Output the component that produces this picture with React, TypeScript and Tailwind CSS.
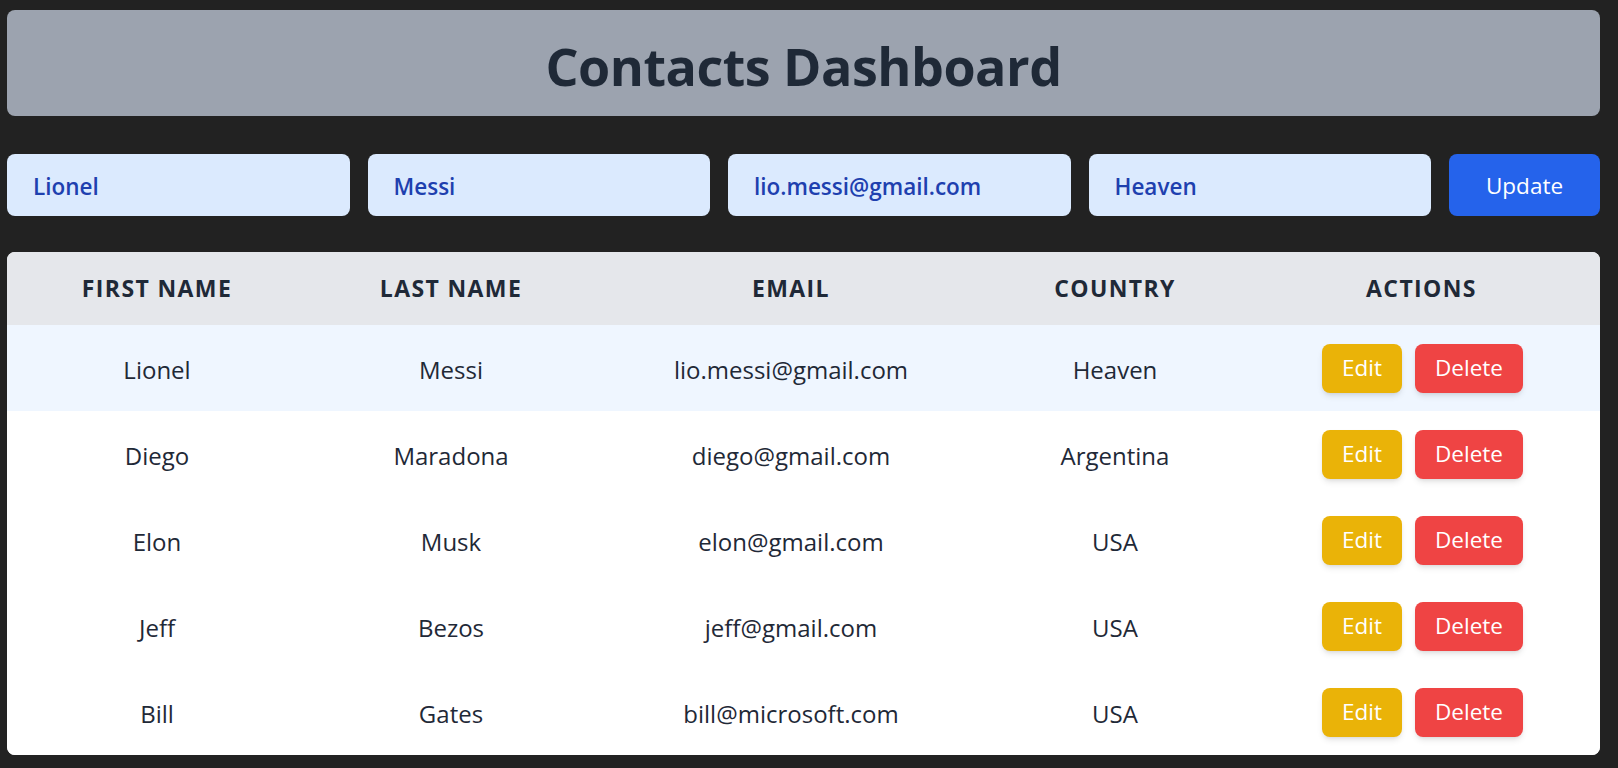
import React from 'react';

interface Contact {
  first: string;
  last: string;
  email: string;
  country: string;
}

const contacts: Contact[] = [
  { first: 'Lionel', last: 'Messi', email: 'lio.messi@gmail.com', country: 'Heaven' },
  { first: 'Diego', last: 'Maradona', email: 'diego@gmail.com', country: 'Argentina' },
  { first: 'Elon', last: 'Musk', email: 'elon@gmail.com', country: 'USA' },
  { first: 'Jeff', last: 'Bezos', email: 'jeff@gmail.com', country: 'USA' },
  { first: 'Bill', last: 'Gates', email: 'bill@microsoft.com', country: 'USA' },
];

const selected = 0;

const App: React.FC = () => {
  const current = contacts[selected];

  return (
    <div className="min-h-screen bg-[#222222] pl-[7px] pr-[18px] pt-[10px] pb-[14px] font-['Open_Sans',sans-serif]">
      <div className="h-[106px] rounded-lg bg-[#9ca3af] flex items-center justify-center pt-[6px]">
        <h1 className="text-[52px] font-bold text-[#1f2937] tracking-[-0.5px]">Contacts Dashboard</h1>
      </div>

      <div className="mt-[38px] flex gap-[18px] h-[62px]">
        {[current.first, current.last, current.email, current.country].map((v, i) => (
          <input
            key={i}
            defaultValue={v}
            className="flex-1 min-w-0 rounded-lg bg-[#dbeafe] px-[26px] pt-[4px] text-[22.5px] font-semibold text-[#1e40af] outline-none"
          />
        ))}
        <button className="w-[151px] rounded-lg bg-[#2563eb] text-white text-[22.5px] pt-[2px]">Update</button>
      </div>

      <div className="mt-[36px] rounded-lg overflow-hidden bg-white">
        <table className="w-full table-fixed border-collapse text-[#1f2937]">
          <colgroup>
            <col className="w-[300px]" />
            <col className="w-[288px]" />
            <col className="w-[392px]" />
            <col className="w-[256px]" />
            <col />
          </colgroup>
          <thead>
            <tr className="h-[73px] bg-[#e5e7eb]">
              {['First Name', 'Last Name', 'Email', 'Country', 'Actions'].map((h) => (
                <th key={h} className="text-[23px] font-bold uppercase tracking-[0.06em] text-center">
                  {h}
                </th>
              ))}
            </tr>
          </thead>
          <tbody>
            {contacts.map((c, i) => (
              <tr key={c.email} className={i === selected ? 'h-[86px] bg-[#eff6ff]' : 'h-[86px] bg-white'}>
                <td className="text-center text-[24px] pt-[4px]">{c.first}</td>
                <td className="text-center text-[24px] pt-[4px]">{c.last}</td>
                <td className="text-center text-[24px] pt-[4px]">{c.email}</td>
                <td className="text-center text-[24px] pt-[4px]">{c.country}</td>
                <td>
                  <div className="flex justify-center gap-[13px] pl-[2px]">
                    <button className="h-[49px] px-[20px] rounded-lg bg-[#eab308] text-white text-[22.5px] shadow-md">Edit</button>
                    <button className="h-[49px] px-[20px] rounded-lg bg-[#ef4444] text-white text-[22.5px] shadow-md">Delete</button>
                  </div>
                </td>
              </tr>
            ))}
          </tbody>
        </table>
      </div>
    </div>
  );
};

export default App;
